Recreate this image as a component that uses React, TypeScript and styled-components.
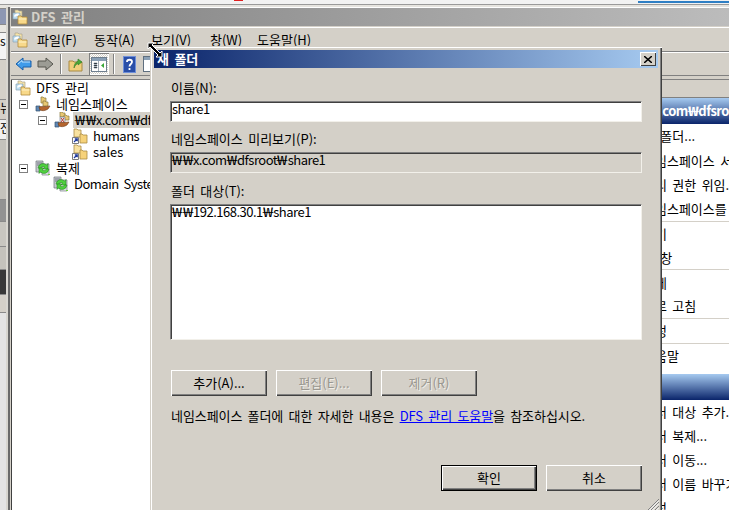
import { Fragment } from "react";
import styled, { createGlobalStyle } from "styled-components";

const GlobalStyle = createGlobalStyle`
	html, body {
		margin: 0;
		padding: 0;
		background: #d4d0c8;
	}
	* {
		box-sizing: border-box;
	}
	svg {
		flex: none;
	}
`;

const Desktop = styled.div`
	position: relative;
	width: 729px;
	height: 510px;
	overflow: hidden;
	display: flex;
	flex-direction: column;
	font-family: "Noto Sans CJK KR", "Liberation Sans", sans-serif;
	font-size: 13px;
	word-spacing: 2.5px;
	line-height: 16px;
	color: #000;
`;

const TopStrip = styled.div`
	height: 7px;
	flex: none;
	background: linear-gradient(#f2f2f2 0 4px, #9a9a9a 4px 5px, #e6e4df 5px);
	position: relative;
`;

const TopAccent = styled.div`
	position: absolute;
	left: 638px;
	right: 0;
	top: 1px;
	height: 2px;
	background: #2f7fc4;
`;

const TopBadge = styled.div`
	position: absolute;
	left: 234px;
	top: 0;
	width: 9px;
	height: 1px;
	background: #e02020;
`;

const DesktopRow = styled.div`
	flex: 1;
	display: flex;
	min-height: 0;
`;

const BehindWindow = styled.div`
	width: 10px;
	flex: none;
	display: flex;
	border-right: 2px solid #6a6a6a;
`;

const BehindBands = styled.div`
	width: 6px;
	display: flex;
	flex-direction: column;
	font-size: 12px;
	overflow: hidden;
`;

const BehindGutter = styled.div`
	width: 2px;
	background: #d8d6d0;
`;

const Band = styled.div<{ $h: number; $bg: string }>`
	height: ${(p) => p.$h}px;
	flex: none;
	background: ${(p) => p.$bg};
	border-bottom: 1px solid #8a8a8a;
	overflow: hidden;
`;

const MainWindow = styled.div`
	flex: 1;
	min-width: 0;
	display: flex;
	flex-direction: column;
	background: #d4d0c8;
	border-top: 1px solid #fff;
	border-left: 1px solid #d4d0c8;
`;

const TitleBar = styled.div`
	height: 18px;
	flex: none;
	display: flex;
	align-items: center;
	gap: 3px;
	padding-left: 1px;
	background: linear-gradient(90deg, #808080, #bcbcbc);
	color: #d4d0c8;
	font-weight: 700;
`;

const MenuBar = styled.div`
	height: 25px;
	flex: none;
	display: flex;
	align-items: center;
	padding-left: 1px;
	margin-top: 1px;
	border-top: 1px solid #fff;
	border-bottom: 1px solid #808080;
`;

const MenuIcon = styled.div`
	width: 25px;
	display: flex;
`;

const MenuItem = styled.span<{ $w: number }>`
	width: ${(p) => p.$w}px;
	flex: none;
	white-space: nowrap;
`;

const ToolBar = styled.div`
	height: 24px;
	flex: none;
	display: flex;
	align-items: center;
	padding-left: 1px;
	border-top: 1px solid #fff;
	border-bottom: 1px solid #808080;
`;

const ToolButton = styled.div<{ $pressed?: boolean }>`
	width: ${(p) => (p.$pressed ? 20 : 22)}px;
	height: 22px;
	flex: none;
	margin-left: ${(p) => (p.$pressed ? 2 : 0)}px;
	display: flex;
	align-items: center;
	justify-content: center;
	${(p) =>
		p.$pressed &&
		`
		background: repeating-conic-gradient(#fff 0 25%, #d4d0c8 0 50%) 0 0 / 2px 2px;
		box-shadow: inset 1px 1px 0 #808080, inset -1px -1px 0 #fff;
	`}
`;

const ToolDivider = styled.div`
	width: 2px;
	height: 20px;
	flex: none;
	margin: 0 3px 0 4px;
	background: #808080;
	border-right: 1px solid #fff;
`;

const Body = styled.div`
	flex: 1;
	min-height: 0;
	display: flex;
	margin-top: 3px;
	border-top: 1px solid #808080;
	box-shadow: inset 0 1px 0 #404040;
`;

const Tree = styled.div`
	width: 160px;
	flex: none;
	background: #fff;
	border-left: 1px solid #404040;
	display: flex;
	flex-direction: column;
	white-space: nowrap;
	overflow: hidden;
`;

const TreeRow = styled.div<{ $indent: number }>`
	height: 16px;
	flex: none;
	display: flex;
	align-items: center;
	padding-left: ${(p) => p.$indent}px;
`;

const Expander = styled.span`
	position: relative;
	width: 9px;
	height: 9px;
	flex: none;
	margin-right: 7px;
	background: #fff;
	border: 1px solid #808080;
	&::after {
		content: "";
		position: absolute;
		left: 1px;
		right: 1px;
		top: 3px;
		height: 1px;
		background: #000;
	}
`;

const TreeLabel = styled.span<{ $selected?: boolean }>`
	margin-left: 3px;
	padding: 0 2px;
	${(p) => p.$selected && "background: #d4d0c8;"}
`;

const Center = styled.div`
	flex: 1;
	background: #fff;
`;

const ActionPane = styled.div`
	width: 110px;
	flex: none;
	background: #fff;
	white-space: nowrap;
	overflow: hidden;
`;

const ActionTab = styled.div`
	height: 18px;
	background: #d4d0c8;
	border-bottom: 1px solid #808080;
`;

const ActionHeader = styled.div<{ $top?: number }>`
	height: 26px;
	margin-top: ${(p) => p.$top ?? 0}px;
	padding-left: 12px;
	display: flex;
	align-items: center;
	background: linear-gradient(#a6caf0, #0a246a);
	color: #fff;
	font-weight: 700;
`;

const ActionList = styled.div<{ $row: number }>`
	display: grid;
	grid-auto-rows: ${(p) => p.$row}px;
`;

const ActionRow = styled.div<{ $sep?: boolean }>`
	padding-left: 24px;
	display: flex;
	align-items: center;
	${(p) => p.$sep && "border-bottom: 1px solid #d4d0c8;"}
`;

const Dialog = styled.div`
	position: absolute;
	left: 150px;
	top: 46px;
	width: 512px;
	height: 468px;
	display: flex;
	flex-direction: column;
	padding: 3px 3px 0 3px;
	background: #d4d0c8;
	box-shadow: inset 1px 1px 0 #d4d0c8, inset 2px 2px 0 #fff, inset -1px -1px 0 #404040, inset -2px -2px 0 #808080;
`;

const DialogTitle = styled.div`
	height: 18px;
	flex: none;
	margin: 1px 1px 0 1px;
	padding: 0 2px 0 3px;
	display: flex;
	align-items: center;
	justify-content: space-between;
	background: linear-gradient(90deg, #0a246a, #a6caf0);
	color: #fff;
	font-weight: 700;
`;

const CloseButton = styled.div`
	width: 16px;
	height: 14px;
	display: flex;
	align-items: center;
	justify-content: center;
	background: #d4d0c8;
	box-shadow: inset 1px 1px 0 #fff, inset -1px -1px 0 #404040;
`;

const DialogBody = styled.div`
	flex: 1;
	display: flex;
	flex-direction: column;
	padding: 12px 17px 0 17px;
`;

const FieldLabel = styled.label<{ $top?: number }>`
	display: block;
	height: 16px;
	margin: ${(p) => p.$top ?? 0}px 0 5px 1px;
`;

const Sunken = styled.div<{ $h: number; $disabled?: boolean }>`
	height: ${(p) => p.$h}px;
	padding: 0 2px 0 1px;
	line-height: 14px;
	background: ${(p) => (p.$disabled ? "#d4d0c8" : "#fff")};
	border: 1px solid;
	border-color: #808080 #f2f0ea #f2f0ea #808080;
	box-shadow: inset 1px 1px 0 #404040;
`;

const ButtonRow = styled.div<{ $top: number; $end?: boolean }>`
	display: flex;
	gap: 9px;
	margin-top: ${(p) => p.$top}px;
	padding-left: 1px;
	${(p) => p.$end && "justify-content: flex-end;"}
`;

const PushButton = styled.button<{ $default?: boolean }>`
	width: 96px;
	height: 26px;
	padding: 0;
	font: inherit;
	word-spacing: inherit;
	color: ${(p) => (p.disabled ? "#9a978f" : "#000")};
	${(p) => p.disabled && "text-shadow: 1px 1px 0 #f0eee8;"}
	background: #d4d0c8;
	border: ${(p) => (p.$default ? "1px solid #000" : "0")};
	box-shadow: inset 1px 1px 0 #fff, inset -1px -1px 0 #404040, inset -2px -2px 0 #808080;
`;

const HelpText = styled.p`
	margin: 12px 0 0 1px;
	white-space: nowrap;
	letter-spacing: -0.08px;
`;

const HelpLink = styled.a`
	color: #0000ff;
	text-decoration: underline;
`;

const Grip = styled.div`
	position: absolute;
	right: 3px;
	bottom: 4px;
	display: flex;
`;

const CursorOverlay = styled.div`
	position: absolute;
	left: 147px;
	top: 42px;
	display: flex;
`;

// latin in the old bitmap font runs tighter than Noto, and its won sign is much wider
const Latin = styled.span`
	letter-spacing: -0.5px;
`;

const Won = styled.span`
	display: inline-block;
	width: 10.5px;
	letter-spacing: 0;
	transform: scaleX(1.4);
	transform-origin: left center;
`;

const PathText = ({ text }: { text: string }) => (
	<Latin>
		{text.split("₩").map((part, i) => (
			<Fragment key={i}>
				{i > 0 && <Won>₩</Won>}
				{part}
			</Fragment>
		))}
	</Latin>
);

const StackFolderIcon = () => (
	<svg width="16" height="16" viewBox="0 0 16 16">
		<path d="M3 1h3l1 1h3v5H3z" fill="#f7e4a8" stroke="#a9a48c" strokeWidth=".7" />
		<path d="M1 4h7v6H1z" fill="#bcdcf0" stroke="#8aa4b4" strokeWidth=".7" />
		<path d="M2 7c1-2 3-3 5-2l-1 2c-1-.5-2 0-3 1z" fill="#fff" />
		<path d="M6 7h3l1 1h5v7H6z" fill="#f8d98a" stroke="#b08a3c" strokeWidth=".8" />
		<path d="M6.500 10h8" stroke="#fdf2c8" />
	</svg>
);

const NamespaceIcon = () => (
	<svg width="16" height="16" viewBox="0 0 16 16">
		<path d="M6 1h2l1 1h2v5H6z" fill="#e9c873" stroke="#8a7a3c" strokeWidth=".7" />
		<path d="M8 5h2l1 1h2v4H8z" fill="#e9c873" stroke="#8a7a3c" strokeWidth=".7" />
		<path d="M1 10h4v5H1z" fill="#5f87b5" stroke="#35506f" strokeWidth=".7" />
		<path d="M4 11c3-1 6 0 11-1l-2 3c-3 2-6 2-8 1z" fill="#b5652e" stroke="#6e3d1a" strokeWidth=".6" />
	</svg>
);

const RootIcon = () => (
	<svg width="16" height="16" viewBox="0 0 16 16">
		<path d="M6 0h2l1 1h2v4H6z" fill="#e9c873" stroke="#8a7a3c" strokeWidth=".7" />
		<path d="M10 3h2l1 1h2v4h-5z" fill="#e9c873" stroke="#8a7a3c" strokeWidth=".7" />
		<path d="M1 10h4v5H1z" fill="#5f87b5" stroke="#35506f" strokeWidth=".7" />
		<path d="M6 5h5v6H6z" fill="#dfe6ee" stroke="#6a7280" strokeWidth=".6" />
		<path d="M7 6l3 4M10 6l-3 4" stroke="#c0392b" />
		<path d="M4 11c3-1 6 0 11-1l-2 3c-3 2-6 2-8 1z" fill="#b5652e" stroke="#6e3d1a" strokeWidth=".6" />
	</svg>
);

const ShareFolderIcon = () => (
	<svg width="16" height="16" viewBox="0 0 16 16">
		<path d="M2 1h3l1 1h3v7H2z" fill="#f8e2a0" stroke="#a98a45" strokeWidth=".8" />
		<path d="M8 6h2l1 1h4v8H8z" fill="#f6d27a" stroke="#a98a45" strokeWidth=".8" />
		<path d="M0.500 9.500h6v6h-6z" fill="#fff" stroke="#7a7a7a" />
		<path d="M2 14l3-3M2.800 10.800H5.200V13.200" stroke="#1f3a9e" strokeWidth="1.300" fill="none" />
	</svg>
);

const ReplicationIcon = () => (
	<svg width="16" height="16" viewBox="0 0 16 16">
		<path d="M1 1h7v11H1z" fill="#c8ccd0" stroke="#6a7078" strokeWidth=".7" />
		<path d="M2 3h5M2 5h5" stroke="#778" />
		<path d="M7 4h7v11H7z" fill="#dfe2e5" stroke="#7a8088" strokeWidth=".7" />
		<path d="M3 8a5 5 0 0 1 8.500-3L13 3.500V9H8l1.800-1.800A2.800 2.800 0 0 0 5.500 8.500z" fill="#4fd03f" stroke="#1f7a1a" strokeWidth=".5" />
		<path d="M14 9a5 5 0 0 1-8.500 3L4 13.500V8h5L7.200 9.800a2.800 2.800 0 0 0 4.300-.8z" fill="#4fd03f" stroke="#1f7a1a" strokeWidth=".5" />
		<path d="M13 14h2v1h-2z" fill="#6fd13a" />
	</svg>
);

const BackIcon = () => (
	<svg width="17" height="16" viewBox="0 0 17 16">
		<path d="M1 8l7-6v3h8v6H8v3z" fill="#3f9bea" stroke="#1b5fa8" strokeLinejoin="round" />
		<path d="M3 8l4-3.500V6h8" stroke="#bfe2fb" fill="none" />
	</svg>
);

const ForwardIcon = () => (
	<svg width="17" height="16" viewBox="0 0 17 16">
		<path d="M16 8l-7-6v3H1v6h8v3z" fill="#9c9c94" stroke="#56564f" strokeLinejoin="round" />
	</svg>
);

const UpIcon = () => (
	<svg width="16" height="16" viewBox="0 0 16 16">
		<path d="M1 5h4l1 1h8v9H1z" fill="#f0cf7c" stroke="#a98a45" />
		<path d="M6 12c0-4 2-6 4-7V3l4 3-4 3V7c-1 1-3 2-4 5z" fill="#4aa83a" stroke="#2d7a24" strokeWidth=".6" />
	</svg>
);

const ConsoleTreeIcon = () => (
	<svg width="16" height="15" viewBox="0 0 16 15">
		<rect x=".5" y=".5" width="15" height="14" fill="#fff" stroke="#6f7f8f" />
		<path d="M1 1h14v3H1z" fill="#8aa0b6" />
		<path d="M3 6h3v1H3zM3 8h3v1H3zM3 10h3v1H3zM7.500 4v10" stroke="#5f6f7f" strokeWidth=".6" />
		<path d="M13 6v5l-3-2.500z" fill="#3aa83a" />
	</svg>
);

const HelpIcon = () => (
	<svg width="13" height="17" viewBox="0 0 13 17">
		<rect width="13" height="17" fill="#2a4fa8" />
		<rect x=".5" y=".5" width="12" height="16" fill="none" stroke="#6f8fd8" />
		<path d="M4 6c0-3 5-3 5 0 0 2-2.500 2-2.500 4.500M6.500 12v2" stroke="#fff" strokeWidth="1.800" fill="none" />
	</svg>
);

const PageIcon = () => (
	<svg width="16" height="16" viewBox="0 0 16 16">
		<rect x=".5" y=".5" width="15" height="15" fill="#fff" stroke="#5f6f7f" />
		<path d="M1 1h14v3H1z" fill="#8aa0b6" />
	</svg>
);

function App() {
	return (
		<>
			<GlobalStyle />
			<Desktop>
				<TopStrip>
					<TopBadge />
					<TopAccent />
				</TopStrip>
				<DesktopRow>
					<BehindWindow>
						<BehindBands>
							<Band $h={2} $bg="#e8e6e0" />
							<Band $h={16} $bg="#8d97b3" />
							<Band $h={8} $bg="#e8e6e0" />
							<Band $h={27} $bg="#f4f4f4">s</Band>
							<Band $h={40} $bg="#d4d0c8" />
							<Band $h={20} $bg="#d4d0c8">뉴</Band>
							<Band $h={20} $bg="#f0f0f0">전</Band>
							<Band $h={60} $bg="#c4c2bc" />
							<Band $h={22} $bg="#929292" />
							<Band $h={25} $bg="#c8c6c0" />
							<Band $h={23} $bg="#c4c2bc" />
							<Band $h={25} $bg="#383838" />
							<Band $h={18} $bg="#d4d0c8" />
							<Band $h={200} $bg="#e4e4e4" />
						</BehindBands>
						<BehindGutter />
					</BehindWindow>
					<MainWindow>
						<TitleBar>
							<StackFolderIcon />
							DFS 관리
						</TitleBar>
						<MenuBar>
							<MenuIcon>
								<StackFolderIcon />
							</MenuIcon>
							<MenuItem $w={57}>파일(F)</MenuItem>
							<MenuItem $w={57}>동작(A)</MenuItem>
							<MenuItem $w={59}>보기(V)</MenuItem>
							<MenuItem $w={47}>창(W)</MenuItem>
							<MenuItem $w={60}>도움말(H)</MenuItem>
						</MenuBar>
						<ToolBar>
							<ToolButton>
								<BackIcon />
							</ToolButton>
							<ToolButton>
								<ForwardIcon />
							</ToolButton>
							<ToolDivider />
							<ToolButton>
								<UpIcon />
							</ToolButton>
							<ToolButton $pressed>
								<ConsoleTreeIcon />
							</ToolButton>
							<ToolDivider />
							<ToolButton>
								<HelpIcon />
							</ToolButton>
							<ToolButton>
								<PageIcon />
							</ToolButton>
						</ToolBar>
						<Body>
							<Tree>
								<TreeRow $indent={3}>
									<StackFolderIcon />
									<TreeLabel>DFS 관리</TreeLabel>
								</TreeRow>
								<TreeRow $indent={7}>
									<Expander />
									<NamespaceIcon />
									<TreeLabel>네임스페이스</TreeLabel>
								</TreeRow>
								<TreeRow $indent={26}>
									<Expander />
									<RootIcon />
									<TreeLabel $selected>
										<PathText text="₩₩x.com₩dfsroot" />
									</TreeLabel>
								</TreeRow>
								<TreeRow $indent={60}>
									<ShareFolderIcon />
									<TreeLabel>
										<Latin>humans</Latin>
									</TreeLabel>
								</TreeRow>
								<TreeRow $indent={60}>
									<ShareFolderIcon />
									<TreeLabel>sales</TreeLabel>
								</TreeRow>
								<TreeRow $indent={7}>
									<Expander />
									<ReplicationIcon />
									<TreeLabel>복제</TreeLabel>
								</TreeRow>
								<TreeRow $indent={41}>
									<ReplicationIcon />
									<TreeLabel>
										<Latin>Domain System Volume</Latin>
									</TreeLabel>
								</TreeRow>
							</Tree>
							<Center />
							<ActionPane>
								<ActionTab />
								<ActionHeader>
									<PathText text="₩₩x.com₩dfsroot" />
								</ActionHeader>
								<ActionList $row={24.4}>
									<ActionRow>새 폴더...</ActionRow>
									<ActionRow>네임스페이스 서버 추가...</ActionRow>
									<ActionRow>관리 권한 위임...</ActionRow>
									<ActionRow $sep>네임스페이스를 표시</ActionRow>
									<ActionRow>보기</ActionRow>
									<ActionRow $sep>새 창</ActionRow>
									<ActionRow>삭제</ActionRow>
									<ActionRow $sep>새로 고침</ActionRow>
									<ActionRow $sep>속성</ActionRow>
									<ActionRow>도움말</ActionRow>
								</ActionList>
								<ActionHeader $top={6} />
								<ActionList $row={24}>
									<ActionRow>폴더 대상 추가...</ActionRow>
									<ActionRow>폴더 복제...</ActionRow>
									<ActionRow>폴더 이동...</ActionRow>
									<ActionRow>폴더 이름 바꾸기</ActionRow>
									<ActionRow>속성</ActionRow>
								</ActionList>
							</ActionPane>
						</Body>
					</MainWindow>
				</DesktopRow>
				<Dialog>
					<DialogTitle>
						새 폴더
						<CloseButton>
							<svg width="8" height="7" viewBox="0 0 8 7">
								<path d="M0 0l8 7M8 0L0 7" stroke="#000" strokeWidth="1.500" />
							</svg>
						</CloseButton>
					</DialogTitle>
					<DialogBody>
						<FieldLabel>이름(N):</FieldLabel>
						<Sunken $h={21}>
							<Latin>share1</Latin>
						</Sunken>
						<FieldLabel $top={9}>네임스페이스 미리보기(P):</FieldLabel>
						<Sunken $h={21} $disabled>
							<PathText text="₩₩x.com₩dfsroot₩share1" />
						</Sunken>
						<FieldLabel $top={10}>폴더 대상(T):</FieldLabel>
						<Sunken $h={136}>
							<PathText text="₩₩192.168.30.1₩share1" />
						</Sunken>
						<ButtonRow $top={30}>
							<PushButton>추가(A)...</PushButton>
							<PushButton disabled>편집(E)...</PushButton>
							<PushButton disabled>제거(R)</PushButton>
						</ButtonRow>
						<HelpText>
							네임스페이스 폴더에 대한 자세한 내용은 <HelpLink href="#">DFS 관리 도움말</HelpLink>을 참조하십시오.
						</HelpText>
						<ButtonRow $top={41} $end>
							<PushButton $default>확인</PushButton>
							<PushButton>취소</PushButton>
						</ButtonRow>
					</DialogBody>
					<Grip>
						<svg width="12" height="12" viewBox="0 0 12 12">
							<path d="M12 1L1 12M12 4L4 12M12 8l-4 4" stroke="#808080" />
							<path d="M12 2.500L2.500 12M12 5.500L5.500 12M12 9.500L9.500 12" stroke="#fff" />
						</svg>
					</Grip>
				</Dialog>
				<CursorOverlay>
					<svg width="16" height="16" viewBox="0 0 16 16">
						<path d="M1 1h6L5 3l8 8 2-2v6H9l2-2-8-8-2 2z" fill="#000" stroke="#fff" />
					</svg>
				</CursorOverlay>
			</Desktop>
		</>
	);
}

export default App;
